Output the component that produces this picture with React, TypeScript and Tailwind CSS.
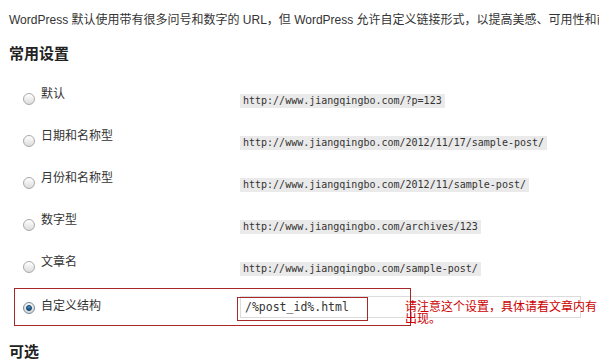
import React from "react";

const rows = [
  { label: "默认", url: "http://www.jiangqingbo.com/?p=123" },
  { label: "日期和名称型", url: "http://www.jiangqingbo.com/2012/11/17/sample-post/" },
  { label: "月份和名称型", url: "http://www.jiangqingbo.com/2012/11/sample-post/" },
  { label: "数字型", url: "http://www.jiangqingbo.com/archives/123" },
  { label: "文章名", url: "http://www.jiangqingbo.com/sample-post/" },
];

function Radio({ checked }: { checked?: boolean }) {
  return (
    <div
      className={
        "w-[12px] h-[12px] rounded-full border flex items-center justify-center " +
        (checked
          ? "border-[#7a8a99] bg-gradient-to-b from-[#f4f4f4] to-[#cfd6dc]"
          : "border-[#a9a9a9] bg-gradient-to-b from-[#ffffff] to-[#dcdcdc]")
      }
    >
      {checked && (
        <div className="w-[6px] h-[6px] rounded-full bg-gradient-to-b from-[#4d9ad0] to-[#0d4b7c] border border-[#123c5e]" />
      )}
    </div>
  );
}

export default function App() {
  const sans = "font-['Liberation_Sans','Noto_Sans_CJK_SC',sans-serif]";
  const mono = "font-['DejaVu_Sans_Mono','Liberation_Mono',monospace]";
  return (
    <div className={"w-[599px] h-[362px] overflow-hidden bg-white text-[#333] " + sans}>
      <p className="pl-[9px] pt-[12px] text-[12px] leading-[16px] whitespace-nowrap">
        WordPress 默认使用带有很多问号和数字的 URL，但 WordPress 允许自定义链接形式，以提高美感、可用性和前向兼容性。
      </p>
      <h3 className="pl-[9px] mt-[17px] text-[15px] leading-[18px] font-bold text-[#222]">常用设置</h3>
      <div className="mt-[17px]">
        {rows.map((r) => (
          <div key={r.label} className="h-[42px] flex pl-[23px] pt-[7px]">
            <div className="w-[18px] pt-[6px]">
              <Radio />
            </div>
            <div className="w-[199px] text-[12px] leading-[14px]">{r.label}</div>
            <div>
              <code className={"inline-block mt-[2px] bg-[#eaeaea] px-[3px] text-[10px] leading-[14px] text-[#333] " + mono}>
                {r.url}
              </code>
            </div>
          </div>
        ))}
        <div className="relative h-[40px] flex pl-[23px]">
          <div className="w-[18px] pt-[12px]">
            <Radio checked />
          </div>
          <div className="w-[199px] pt-[9px] text-[12px] leading-[14px]">自定义结构</div>
          <div className="pt-[6px]">
            <div
              className={
                "w-[341px] h-[22px] border border-[#dcdcdc] px-[4px] text-[11.5px] leading-[20px] text-[#333] " + mono
              }
            >
              /%post_id%.html
            </div>
          </div>
          <div className="absolute left-[14px] top-[-2px] w-[397px] h-[38px] border border-[#a8282a]" />
          <div className="absolute left-[237px] top-[7px] w-[131px] h-[24px] border border-[#a8282a]" />
          <div className="absolute left-[405px] top-[11px] w-[194px] text-[12px] leading-[12px] text-[#cc0000]">
            请注意这个设置，具体请看文章内有出现。
          </div>
        </div>
      </div>
      <h3 className="pl-[9px] mt-[13px] text-[15px] leading-[18px] font-bold text-[#222]">可选</h3>
    </div>
  );
}
